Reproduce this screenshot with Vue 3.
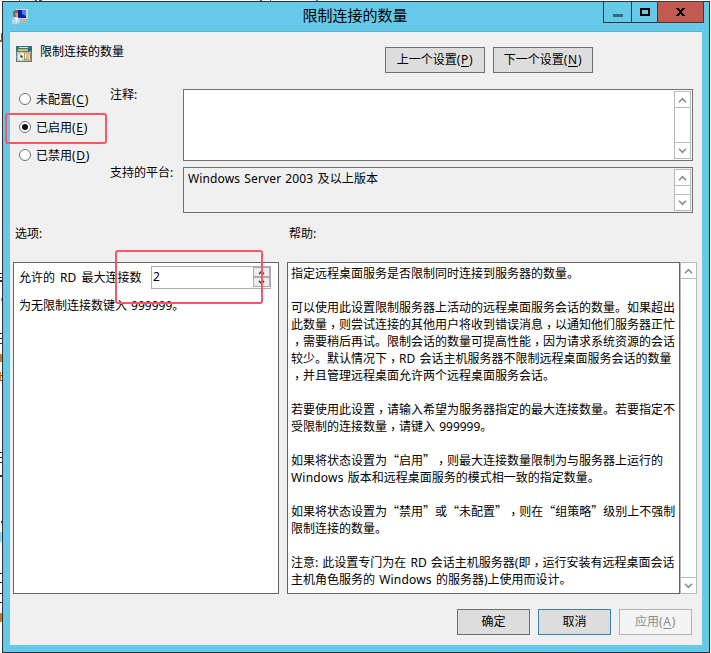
<script setup>
import { h } from 'vue'

const helpLines = [
  '指定远程桌面服务是否限制同时连接到服务器的数量。',
  '',
  '可以使用此设置限制服务器上活动的远程桌面服务会话的数量。如果超出',
  '此数量，则尝试连接的其他用户将收到错误消息，以通知他们服务器正忙',
  '，需要稍后再试。限制会话的数量可提高性能，因为请求系统资源的会话',
  '较少。默认情况下，RD 会话主机服务器不限制远程桌面服务会话的数量',
  '，并且管理远程桌面允许两个远程桌面服务会话。',
  '',
  '若要使用此设置，请输入希望为服务器指定的最大连接数量。若要指定不',
  '受限制的连接数量，请键入 999999。',
  '',
  '如果将状态设置为“启用”，则最大连接数量限制为与服务器上运行的',
  'Windows 版本和远程桌面服务的模式相一致的指定数量。',
  '',
  '如果将状态设置为“禁用”或“未配置”，则在“组策略”级别上不强制',
  '限制连接的数量。',
  '',
  '注意: 此设置专门为在 RD 会话主机服务器(即，运行安装有远程桌面会话',
  '主机角色服务的 Windows 的服务器)上使用而设计。',
]

// Splits a line so quotes and commas can take full-width cells.
const tokens = (line) =>
  line.split(/([“”，]|Windows)/).filter(Boolean).map((text) => ({
    text,
    kind:
      text === '，' ? 'comma'
      : text === '“' || text === '”' ? 'quote'
      : text === 'Windows' ? 'latin'
      : '',
  }))

const radios = [
  { label: '未配置', key: 'C', on: false },
  { label: '已启用', key: 'E', on: true },
  { label: '已禁用', key: 'D', on: false },
]

const ScrollBar = () =>
  h('div', { class: 'scroll' }, [
    h('div', { class: 'arrow up' }, [
      h('svg', { width: 9, height: 7, viewBox: '0 0 9 7' }, [
        h('path', { d: 'M1 5.2 4.5 1.7 8 5.2', fill: 'none', stroke: '#8c8c8c', 'stroke-width': 1.6 }),
      ]),
    ]),
    h('div', { class: 'track' }),
    h('div', { class: 'arrow' }, [
      h('svg', { width: 9, height: 7, viewBox: '0 0 9 7' }, [
        h('path', { d: 'M1 1.8 4.5 5.3 8 1.8', fill: 'none', stroke: '#8c8c8c', 'stroke-width': 1.6 }),
      ]),
    ]),
  ])
</script>

<template>
  <div class="screen">
    <svg class="behind" width="711" height="653" viewBox="0 0 711 653" shape-rendering="crispEdges">
      <path d="M19 0h1M35 0h2M39 0h3M260 0h2M270 0h1" stroke="#555" transform="translate(0 .5)" />
      <path d="M316 .5h2" stroke="#2080d0" />
      <path d="M1 33h1v9h-1zM0 40h1v2h-1z" fill="#8a6030" />
      <path d="M0 273h2v1H0zM0 277h2v1H0zM0 280h2v2H0zM0 333h2v1H0zM0 338h2v1H0zM0 343h2v1H0zM0 375h2v1H0zM0 380h2v1H0zM0 452h2v1H0zM0 457h2v1H0zM0 462h2v1H0zM0 475h2v2H0zM1 521h1v2H1zM0 534h2v1H0zM0 573h2v1H0zM0 582h2v1H0zM0 593h2v1H0zM0 602h2v1H0z" fill="#303030" />
      <path d="M1 298h1v3H1zM0 354h2v8H0zM0 372h1v9H0zM0 613h2v9H0z" fill="#c87a28" />
      <path d="M0 532h2v10H0z" fill="#8bd7fa" />
    </svg>

    <div class="window">
      <header class="titlebar">
        <svg class="app-icon" width="16" height="16" viewBox="0 0 16 16">
          <path d="M4 0h12v10H4z" fill="#d3d6cf" />
          <path d="M5 1h9v8H5z" fill="#0a1cae" />
          <path d="M10 1h4v6l-4-2z" fill="#4a80ee" />
          <path d="M9 10h4v2h2v2H8v-2h1z" fill="#b3b6b4" />
          <path d="M1 3 3 1h3v3L5 8H2L1 6z" fill="#85664a" />
          <path d="M3 4h3v4H4z" fill="#d2a077" />
          <path d="M0 14v-3l2-3h4l2 3v2l-2 2H1z" fill="#b9d6e6" />
          <path d="M3 9h3l-1 5z" fill="#eef7fb" />
        </svg>
        <h1>限制连接的数量</h1>
        <div class="controls">
          <span class="ctl min"><i></i></span>
          <span class="ctl max"><i></i></span>
          <span class="ctl close">
            <svg width="9" height="8" viewBox="0 0 9 8" shape-rendering="crispEdges">
              <path d="M0 0h3v1h1v1h1V1h1V0h3v1H8v1H7v1H6v2h1v1h1v1h1v1H6V7H5V6H4v1H3v1H0V7h1V6h1V5h1V3H2V2H1V1H0z" fill="#000" />
            </svg>
          </span>
        </div>
      </header>

      <main class="client">
        <section class="head">
          <svg class="policy-icon" width="16" height="16" viewBox="0 0 16 16">
            <path d="M0 0h16v16H0z" fill="#65767a" />
            <path d="M0 0h16v5H0z" fill="#28777c" />
            <path d="M3 1h9v1H3z" fill="#d9e5de" />
            <path d="M2 3h11v2H2z" fill="#e7b64b" />
            <path d="M12 3h2v2h-2z" fill="#2450c8" />
            <path d="M1 6h14v9H1z" fill="#ccd2cd" />
            <circle cx="5.500" cy="10.500" r="4.500" fill="#f1f3ef" stroke="#a3b1ac" />
            <path d="M5.500 10.500 2 7l2-1zM5.500 10.500 9 14l-2 1z" fill="#b7d88e" />
            <circle cx="5.500" cy="10.500" r="1.200" fill="#384448" />
            <path d="M8.500 7h6v7h-6z" fill="#fff4ba" stroke="#9b8257" stroke-width=".8" />
            <path d="M10 9h4M10 11h4M9 13h4" stroke="#9c7431" stroke-width=".8" />
          </svg>
          <span class="policy-name">限制连接的数量</span>
          <button class="btn nav">上一个设置<span class="key">(<u>P</u>)</span></button>
          <button class="btn nav">下一个设置<span class="key">(<u>N</u>)</span></button>
        </section>

        <section class="state">
          <div class="radios">
            <label v-for="r in radios" :key="r.key" class="radio">
              <span class="dot" :class="{ on: r.on }"></span>
              <span class="radio-text">{{ r.label }}<span class="key">(<u>{{ r.key }}</u>)</span></span>
            </label>
          </div>
          <div class="fields">
            <div class="field">
              <span class="label">注释:</span>
              <div class="box comment"><p></p><ScrollBar /></div>
            </div>
            <div class="field">
              <span class="label">支持的平台:</span>
              <div class="box platform"><p>Windows Server 2003 及以上版本</p><ScrollBar /></div>
            </div>
          </div>
        </section>

        <section class="captions"><span>选项:</span><span>帮助:</span></section>

        <section class="panes">
          <div class="pane options">
            <div class="option">
              <span class="option-label">允许的 RD 最大连接数</span>
              <div class="spin">
                <span>2</span>
                <div class="steps">
                  <i><svg width="7" height="5" viewBox="0 0 7 5"><path d="M1 4 3.500 1.500 6 4" /></svg></i>
                  <i><svg width="7" height="5" viewBox="0 0 7 5"><path d="M1 1 3.500 3.500 6 1" /></svg></i>
                </div>
              </div>
            </div>
            <p class="hint">为无限制连接数键入 999999。</p>
          </div>
          <div class="pane help">
            <p v-for="(line, i) in helpLines" :key="i"><span v-for="(t, j) in tokens(line)" :key="j" :class="t.kind">{{ t.text }}</span></p>
          </div>
          <ScrollBar />
        </section>

        <footer class="actions">
          <button class="btn">确定</button>
          <button class="btn default">取消</button>
          <button class="btn off">应用<span class="key">(<u>A</u>)</span></button>
        </footer>
      </main>
    </div>

    <div class="mark mark-state"></div>
    <div class="mark mark-value"></div>
  </div>
</template>

<style>
body {
  background: #fff;
  overflow: hidden;
}
.scroll {
  box-sizing: border-box;
  width: 17px;
  flex: none;
  display: flex;
  flex-direction: column;
  border: 1px solid #b9b9b9;
  background: #fff;
}
.scroll .arrow {
  box-sizing: border-box;
  height: 15px;
  flex: none;
  display: flex;
  align-items: center;
  justify-content: center;
}
.scroll .up {
  padding-top: 2px;
}
.scroll .track {
  flex: 1;
  border: solid #b9b9b9;
  border-width: 1px 0;
}
</style>

<style scoped>
* {
  box-sizing: border-box;
}
p, h1 {
  margin: 0;
}
.screen {
  position: relative;
  width: 711px;
  height: 653px;
  padding: 1px 1px 0 2px;
  background: #fff;
  color: #000;
  font: 12px/17px "Noto Sans", "Noto Sans CJK SC", sans-serif;
  text-spacing-trim: space-all;
  white-space: pre;
}
.behind {
  position: absolute;
  left: 0;
  top: 0;
}
.window {
  position: relative;
  height: 652px;
  border: 1px solid #2b3136;
  background: #66c9ea;
  display: flex;
  flex-direction: column;
  padding: 0 7px 7px;
}
.titlebar {
  height: 29px;
  flex: none;
  display: grid;
  grid-template-columns: 101px 1fr 105px;
  margin-right: -2px;
}
.app-icon {
  margin: 7px 0 0 2px;
}
h1 {
  font-size: 15px;
  font-weight: 400;
  line-height: 27px;
  text-align: center;
}
.controls {
  height: 22px;
  margin-top: -1px;
  padding-left: 4px;
  display: flex;
}
.ctl {
  border: 1px solid #2b3136;
  border-right-width: 0;
  display: flex;
  align-items: center;
  justify-content: center;
}
.min {
  width: 28px;
}
.min i {
  width: 10px;
  height: 3px;
  margin-top: 6px;
  background: #366a7b;
}
.max {
  width: 26px;
}
.max i {
  width: 10px;
  height: 8px;
  border: 2px solid #000;
}
.close {
  width: 47px;
  border-right-width: 1px;
  border-color: #56302e;
  background: #c35a50;
}
.client {
  flex: 1;
  border-top: 1px solid #62aeca;
  background: #f0f0f0;
}
.head {
  display: flex;
  height: 57px;
  padding: 14px 0 0 6px;
}
.policy-name {
  width: 345px;
  margin-left: 8px;
  margin-top: -3px;
}
.policy-name + .btn {
  margin-right: 8px;
}
.btn {
  width: 73px;
  height: 26px;
  padding: 0 0 1px;
  border: 1px solid #707070;
  border-radius: 0;
  background: #ddd;
  color: #000;
  font: inherit;
}
.nav {
  width: 100px;
  margin-top: 1px;
}
.policy-icon {
  flex: none;
}
.key {
  letter-spacing: 0.7px;
}
u {
  text-underline-offset: 2px;
}
.state {
  display: flex;
  height: 124px;
}
.radios {
  width: 100px;
  padding-left: 9px;
}
.radio {
  height: 28px;
  padding-top: 1px;
  display: flex;
  gap: 5px;
}
.radio-text {
  margin-top: 1px;
}
.dot {
  width: 12px;
  height: 12px;
  flex: none;
  margin-top: 3px;
  border: 1px solid #707070;
  border-radius: 50%;
  background: #fff;
  display: flex;
  align-items: center;
  justify-content: center;
}
.dot.on::after {
  content: "";
  width: 6px;
  height: 6px;
  border-radius: 50%;
  background: #111;
}
.fields {
  display: flex;
  flex-direction: column;
  gap: 6px;
}
.field {
  display: flex;
}
.label {
  width: 73px;
  margin-top: -3px;
}
.box {
  width: 510px;
  display: flex;
  justify-content: space-between;
  border: 1px solid #707070;
  padding: 1px;
}
.box p {
  padding: 1px 0 0 3px;
  letter-spacing: 0.13px;
  word-spacing: 0.9px;
}
.comment {
  height: 72px;
  background: #fff;
}
.platform {
  height: 46px;
}
.captions {
  display: grid;
  grid-template-columns: 274px 1fr;
  height: 49px;
  padding: 12px 0 0 5px;
}
.panes {
  display: flex;
  height: 332px;
  padding-left: 3px;
  word-spacing: 1px;
}
.pane {
  border: 1px solid #646464;
  background: #fff;
}
.options {
  width: 266px;
  margin-right: 8px;
  padding: 3px 0 0 5px;
}
.option {
  display: flex;
  align-items: center;
  height: 23px;
}
.option-label {
  width: 132px;
  word-spacing: 2px;
}
.spin {
  width: 120px;
  height: 23px;
  display: flex;
  justify-content: space-between;
  border: 1px solid #abadb3;
  padding-left: 1px;
  line-height: 20px;
}
.steps {
  width: 17px;
  height: 20px;
  display: flex;
  flex-direction: column;
}
.steps i {
  height: 10px;
  display: flex;
  align-items: center;
  justify-content: center;
  border: 1px solid #acacac;
  background: #ededed;
}
.steps path {
  fill: none;
  stroke: #333;
  stroke-width: 1.5;
}
.hint {
  margin-top: 8px;
}
.help {
  width: 393px;
  padding: 2px 0 0 3px;
}
.help p {
  height: 17px;
}
.latin {
  letter-spacing: 0.2px;
}
.quote {
  font-family: "Noto Sans CJK SC", sans-serif;
  line-height: 1;
}
.comma {
  font-family: "Noto Sans CJK TC", sans-serif;
  line-height: 1;
  vertical-align: -3px;
}
.actions {
  display: flex;
  gap: 8px;
  padding: 15px 0 0 447px;
}
.default {
  border-color: #3c7fb1;
}
.off {
  border-color: #b0b4b6;
  background: #f4f4f4;
  color: #8c8c8c;
}
.mark {
  position: absolute;
  border: 2px solid #fb5566;
  border-radius: 3px;
}
.mark-state {
  left: 5px;
  top: 113px;
  width: 102px;
  height: 31px;
}
.mark-value {
  left: 115px;
  top: 250px;
  width: 148px;
  height: 54px;
}
</style>
